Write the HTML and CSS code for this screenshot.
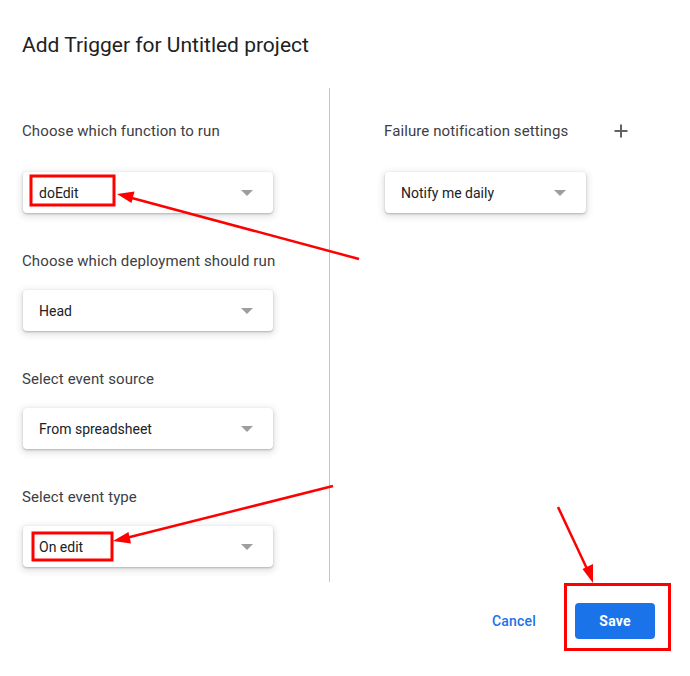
FILE: index.html
```html
<!DOCTYPE html>
<html>
<head>
<meta charset="utf-8">
<link rel="stylesheet" href="styles.css">
</head>
<body>
<div class="dialog">
  <h1 class="title">Add Trigger for Untitled project</h1>
  <div class="columns">
    <div class="col col-left">
      <div class="field first">
        <div class="label">Choose which function to run</div>
        <div class="select"><span>doEdit</span><i class="caret"></i></div>
      </div>
      <div class="field">
        <div class="label">Choose which deployment should run</div>
        <div class="select"><span>Head</span><i class="caret"></i></div>
      </div>
      <div class="field">
        <div class="label">Select event source</div>
        <div class="select"><span>From spreadsheet</span><i class="caret"></i></div>
      </div>
      <div class="field">
        <div class="label">Select event type</div>
        <div class="select"><span>On edit</span><i class="caret"></i></div>
      </div>
    </div>
    <div class="col col-right">
      <div class="field first">
        <div class="label-row">
          <div class="label">Failure notification settings</div>
          <svg class="plus" width="14" height="14" viewBox="0 0 14 14"><path d="M7 0.5v13M0.5 7h13" stroke="#5f6368" stroke-width="2" fill="none"/></svg>
        </div>
        <div class="select select-narrow"><span>Notify me daily</span><i class="caret"></i></div>
      </div>
    </div>
  </div>
  <div class="footer">
    <button class="btn btn-text">Cancel</button>
    <button class="btn btn-primary">Save</button>
  </div>
</div>
<svg class="annot" width="690" height="676" viewBox="0 0 690 676">
  <g fill="none" stroke="#f00" stroke-width="3">
    <rect x="31" y="176" width="83" height="29"/>
    <rect x="33" y="533" width="79" height="27"/>
    <rect x="565.5" y="584.5" width="104" height="65"/>
    <line x1="359" y1="259" x2="130" y2="197.5" stroke-width="2.5"/>
    <line x1="333" y1="486" x2="126" y2="538" stroke-width="2.5"/>
    <line x1="558" y1="507" x2="588" y2="571" stroke-width="2.5"/>
  </g>
  <g fill="#f00">
    <polygon points="117,194 134.5,191.5 131.5,203"/>
    <polygon points="113,541 128.5,532 131,543.5"/>
    <polygon points="593,583 582.5,569 593,564"/>
  </g>
</svg>
</body>
</html>
```
FILE: styles.css
```css
html, body {
  margin: 0;
  padding: 0;
  background: #fff;
}
body {
  font-family: Roboto, "Liberation Sans", Arial, sans-serif;
  color: #202124;
  width: 690px;
  height: 676px;
  position: relative;
  overflow: hidden;
}
.dialog {
  padding: 0;
}
.title {
  margin: 0;
  padding: 33px 0 0 22px;
  font-size: 21px;
  font-weight: 400;
  line-height: 24px;
  color: #202124;
  height: 55px;
  box-sizing: border-box;
}
.columns {
  display: flex;
  margin-top: 33px;
}
.col {
  box-sizing: border-box;
  padding-top: 33px;
}
.col-left {
  width: 330px;
  padding-left: 22px;
  padding-bottom: 15px;
  border-right: 1px solid #c4c4c4;
}
.col-right {
  padding-left: 54px;
}
.field {
  margin-bottom: 38px;
}
.field:last-child {
  margin-bottom: 0;
}
.label {
  font-size: 15px;
  letter-spacing: 0.1px;
  line-height: 20px;
  color: #3c4043;
  margin-bottom: 19px;
}
.field.first .label {
  margin-bottom: 31px;
}
.label-row {
  display: flex;
  justify-content: space-between;
  align-items: flex-start;
  width: 244px;
}
.plus {
  margin-top: 3px;
}
.select {
  margin-left: 1px;
  width: 250px;
  height: 41px;
  box-sizing: border-box;
  padding: 0 20px 0 16px;
  display: flex;
  align-items: center;
  justify-content: space-between;
  background: #fff;
  border-radius: 4px;
  box-shadow: 0 1px 2px rgba(60, 64, 67, 0.3), 0 2px 6px 2px rgba(60, 64, 67, 0.15);
  font-size: 14px;
  color: #202124;
}
.select-narrow {
  width: 201px;
}
.caret {
  display: block;
  width: 0;
  height: 0;
  border-left: 6px solid transparent;
  border-right: 6px solid transparent;
  border-top: 6px solid #9e9e9e;
  margin-top: 1px;
}
.footer {
  display: flex;
  justify-content: flex-end;
  align-items: center;
  margin-top: 21px;
  padding-right: 35px;
  gap: 23px;
}
.btn {
  font-family: Roboto, "Liberation Sans", Arial, sans-serif;
  font-size: 14px;
  border: none;
  border-radius: 4px;
  height: 36px;
  cursor: pointer;
  letter-spacing: 0.2px;
}
.btn-text {
  background: transparent;
  color: #1a73e8;
  font-weight: 500;
  padding: 0 16px;
}
.btn-primary {
  background: #1a73e8;
  color: #fff;
  font-weight: 700;
  width: 80px;
}
.annot {
  position: absolute;
  left: 0;
  top: 0;
  pointer-events: none;
}
```
